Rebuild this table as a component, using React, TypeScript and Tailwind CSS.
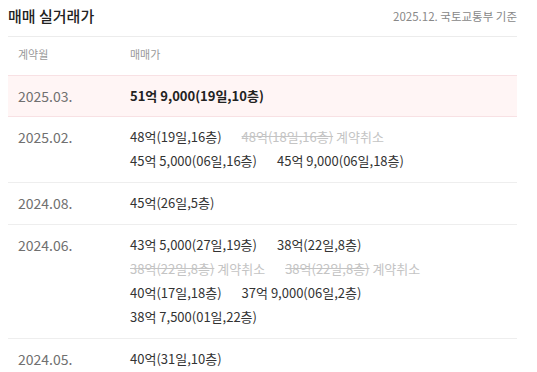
type Deal = { text: string; canceled?: boolean };

interface MonthRow {
  month: string;
  lines: Deal[][];
  highlight?: boolean;
}

const rows: MonthRow[] = [
  { month: "2025.03.", highlight: true, lines: [[{ text: "51억 9,000(19일,10층)" }]] },
  {
    month: "2025.02.",
    lines: [
      [{ text: "48억(19일,16층)" }, { text: "48억(18일,16층)", canceled: true }],
      [{ text: "45억 5,000(06일,16층)" }, { text: "45억 9,000(06일,18층)" }],
    ],
  },
  { month: "2024.08.", lines: [[{ text: "45억(26일,5층)" }]] },
  {
    month: "2024.06.",
    lines: [
      [{ text: "43억 5,000(27일,19층)" }, { text: "38억(22일,8층)" }],
      [
        { text: "38억(22일,8층)", canceled: true },
        { text: "38억(22일,8층)", canceled: true },
      ],
      [{ text: "40억(17일,18층)" }, { text: "37억 9,000(06일,2층)" }],
      [{ text: "38억 7,500(01일,22층)" }],
    ],
  },
  { month: "2024.05.", lines: [[{ text: "40억(31일,10층)" }]] },
];

function DealItem({ deal, bold }: { deal: Deal; bold?: boolean }) {
  if (deal.canceled) {
    return (
      <span className="text-[#c4c4c4]">
        <span className="line-through">{deal.text}</span> 계약취소
      </span>
    );
  }
  return <span className={bold ? "font-bold text-[#222]" : "text-[#333]"}>{deal.text}</span>;
}

export default function App() {
  return (
    <main
      className="w-[537px] h-[372px] overflow-hidden bg-white pl-2"
      style={{ fontFamily: '"Noto Sans CJK KR", "Noto Sans", sans-serif' }}
    >
      <div className="w-[509px]">
        <div className="h-[37px] flex items-center justify-between pb-[3px] border-b border-[#ececec]">
          <h2 className="text-[15px] font-medium text-[#222]">매매 실거래가</h2>
          <span className="text-[11.5px] text-[#888]">2025.12. 국토교통부 기준</span>
        </div>
        <div className="h-[38px] flex items-center pb-[3px] text-[11px] text-[#999]">
          <div className="w-[122px] pl-[10px]">계약월</div>
          <div>매매가</div>
        </div>
        {rows.map((row) => (
          <div
            key={row.month}
            className={
              row.highlight
                ? "flex py-2 border-y border-[#f8e1e4] bg-[#fff5f5] text-[13px] leading-[24px]"
                : "flex pt-2 pb-[9px] border-b border-[#eeeeee] text-[13px] leading-[24px]"
            }
          >
            <div className="w-[122px] shrink-0 pl-[10px] text-[14px] text-[#707070]">{row.month}</div>
            <div className="flex flex-col">
              {row.lines.map((line, i) => (
                <div key={i} className="flex gap-5 whitespace-nowrap">
                  {line.map((deal, j) => (
                    <DealItem key={j} deal={deal} bold={row.highlight} />
                  ))}
                </div>
              ))}
            </div>
          </div>
        ))}
      </div>
    </main>
  );
}
